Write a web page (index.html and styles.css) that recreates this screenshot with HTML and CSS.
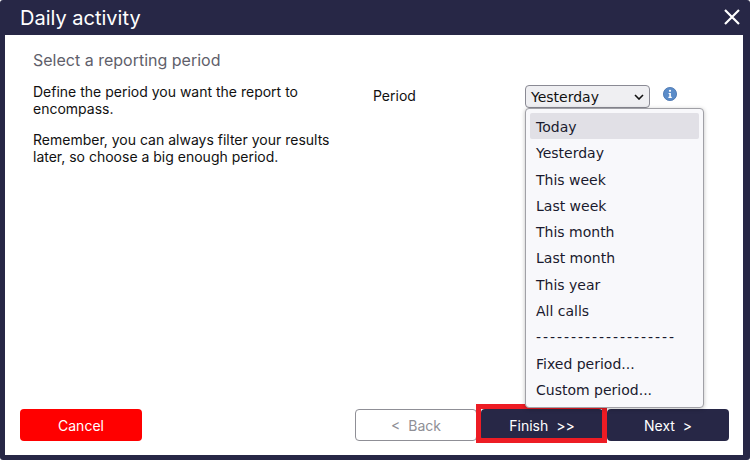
FILE: index.html
```html
<!DOCTYPE html>
<html lang="en">
<head>
  <meta charset="UTF-8" />
  <title>Daily activity</title>
  <link rel="stylesheet" href="styles.css">
</head>
<body>
  <div class="dialog">
    <div class="dialog-header">
      <h1>Daily activity</h1>
      <svg class="close-icon" width="16" height="16" viewBox="0 0 16 16">
        <path d="M1 1 L15 15 M15 1 L1 15" stroke="#fff" stroke-width="2.2" fill="none" />
      </svg>
    </div>
    <div class="dialog-body">
      <div class="content">
        <div class="intro">
          <h2>Select a reporting period</h2>
          <p>Define the period you want the report to encompass.</p>
          <p>Remember, you can always filter your results later, so choose a big enough period.</p>
        </div>
        <div class="period-label">Period</div>
        <div class="period-field">
          <div class="select-box">
            <span>Yesterday</span>
            <svg width="10" height="6" viewBox="0 0 10 6">
              <path d="M1 1 L5 5 L9 1" stroke="#111" stroke-width="1.6" fill="none" />
            </svg>
          </div>
          <svg class="info-icon" width="14" height="14" viewBox="0 0 14 14">
            <circle cx="7" cy="7" r="6.6" fill="#5b8cc9" stroke="#4672ad" stroke-width="0.8" />
            <circle cx="7" cy="3.8" r="1.1" fill="#fff" />
            <path d="M5.6 6 H7.9 V9.8 H8.8 V10.9 H5.4 V9.8 H6.3 V7.1 H5.6 Z" fill="#fff" />
          </svg>
          <ul class="select-list">
            <li class="selected">Today</li>
            <li>Yesterday</li>
            <li>This week</li>
            <li>Last week</li>
            <li>This month</li>
            <li>Last month</li>
            <li>This year</li>
            <li>All calls</li>
            <li class="separator">--------------------</li>
            <li>Fixed period...</li>
            <li>Custom period...</li>
          </ul>
        </div>
      </div>
      <div class="footer">
        <button class="btn btn-cancel">Cancel</button>
        <div class="nav-buttons">
          <button class="btn btn-back">&lt;&nbsp; Back</button>
          <button class="btn btn-dark btn-finish">Finish &nbsp;&gt;&gt;</button>
          <button class="btn btn-dark">Next &nbsp;&gt;</button>
        </div>
      </div>
    </div>
  </div>
</body>
</html>
```

FILE: styles.css
```css
* {
  margin: 0;
  padding: 0;
  box-sizing: border-box;
}
html, body {
  width: 750px;
  height: 460px;
  overflow: hidden;
  font-family: Inter, "Liberation Sans", sans-serif;
  color: #111;
}
.dialog {
  width: 750px;
  height: 460px;
  display: flex;
  flex-direction: column;
  background: #272746;
  border-radius: 3px;
  padding: 0 7px 5px 5px;
}
.dialog-header {
  height: 35px;
  display: flex;
  align-items: center;
  justify-content: space-between;
  padding: 0 0 0 15px;
  color: white;
}
.dialog-header h1 {
  font-size: 20px;
  font-weight: 400;
}
.close-icon {
  margin: 0 3px 1px 0;
}
.dialog-body {
  flex: 1;
  display: flex;
  flex-direction: column;
  justify-content: space-between;
  background: white;
  padding: 15px 14px 14px 15px;
}
.content {
  display: flex;
  padding-left: 13px;
}
.intro {
  width: 340px;
  font-size: 14px;
  line-height: 17px;
}
.intro h2 {
  font-size: 16px;
  font-weight: 400;
  line-height: 20px;
  color: #5f5f6b;
  margin-bottom: 13px;
}
.intro p {
  width: 300px;
  margin-bottom: 14px;
}
.period-label {
  width: 152px;
  font-size: 14px;
  line-height: 17px;
  padding-top: 37px;
}
.period-field {
  position: relative;
  display: flex;
  align-items: flex-start;
  gap: 13px;
  padding-top: 35px;
}
.select-box {
  width: 125px;
  height: 23px;
  display: flex;
  align-items: center;
  justify-content: space-between;
  padding: 0 5px;
  background: #efeff2;
  border: 1px solid #8a8a94;
  border-radius: 4px;
  font-family: "DejaVu Sans", sans-serif;
  font-size: 14px;
}
.info-icon {
  margin-top: 2px;
}
.select-list {
  position: absolute;
  top: 58px;
  left: 0;
  width: 179px;
  height: 300px;
  list-style: none;
  padding: 4px;
  background: #f8f8fb;
  border: 1px solid #a0a0a6;
  border-radius: 4px;
  box-shadow: 0 1px 4px rgba(0,0,0,0.25);
  font-family: "DejaVu Sans", sans-serif;
  font-size: 14px;
  z-index: 2;
}
.select-list li {
  height: 26.3px;
  line-height: 28px;
  padding-left: 6px;
  border-radius: 2px;
  color: #1a1a2e;
}
.select-list li.selected {
  background: #e1e0e6;
}
.select-list li.separator {
  letter-spacing: 1.95px;
}
.footer {
  display: flex;
  justify-content: space-between;
}
.nav-buttons {
  display: flex;
  gap: 4px;
}
.btn {
  width: 122px;
  height: 32px;
  border: none;
  border-radius: 4px;
  font-family: Inter, "Liberation Sans", sans-serif;
  font-size: 14px;
  color: white;
}
.btn-cancel {
  background: #ff0000;
}
.btn-back {
  background: white;
  color: #8f8f96;
  border: 1px solid #8f8f96;
}
.btn-dark {
  background: #272746;
}
.btn-finish {
  position: relative;
}
/* red highlight box drawn over the button */
.btn-finish::after {
  content: "";
  position: absolute;
  top: -5px;
  left: -5px;
  right: -4px;
  bottom: -2px;
  border: 5px solid #ed1c24;
}
```
